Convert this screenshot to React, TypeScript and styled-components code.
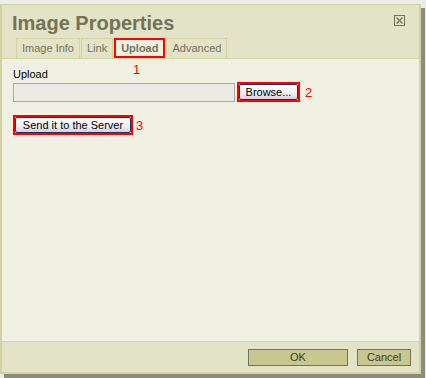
import styled, { createGlobalStyle } from 'styled-components';

const GlobalStyle = createGlobalStyle`
  html, body {
    margin: 0;
    padding: 0;
    background: #ececec;
    font-family: 'Liberation Sans', Arial, sans-serif;
  }
`;

const tabs = ['Image Info', 'Link', 'Upload', 'Advanced'];

const App = () => {
  return (
    <Page>
      <GlobalStyle />
      <Dialog>
        <Header>
          <TitleRow>
            <Title>Image Properties</Title>
            <CloseButton aria-label="close">
              <svg width="11" height="11" viewBox="0 0 11 11">
                <rect x="0.5" y="0.5" width="10" height="10" fill="none" stroke="#737357" />
                <path d="M2.5 2.5 L8.5 8.5 M8.5 2.5 L2.5 8.5" stroke="#737357" strokeWidth="1.2" />
              </svg>
            </CloseButton>
          </TitleRow>
          <TabBar>
            {tabs.map((t) => (
              <Tab key={t} $active={t === 'Upload'}>
                {t}
              </Tab>
            ))}
          </TabBar>
        </Header>
        <Content>
          <Callout $left={131} $top={3}>1</Callout>
          <FieldLabel>Upload</FieldLabel>
          <FileRow>
            <FileInput />
            <Marked>
              <XpButton $width={59}>Browse...</XpButton>
            </Marked>
            <Number>2</Number>
          </FileRow>
          <SendRow>
            <Marked>
              <XpButton $width={116}>Send it to the Server</XpButton>
            </Marked>
            <Number>3</Number>
          </SendRow>
        </Content>
        <Footer>
          <FooterButton $width={100}>OK</FooterButton>
          <FooterButton $width={54}>Cancel</FooterButton>
        </Footer>
      </Dialog>
    </Page>
  );
};

export default App;

const Page = styled.div`
  width: 426px;
  height: 378px;
  padding-top: 4px;
  box-sizing: border-box;
`;

const Dialog = styled.div`
  width: 421px;
  height: 370px;
  box-sizing: border-box;
  border: 2px solid #d3d3a1;
  border-top-width: 1px;
  background: #e3e3c7;
  display: flex;
  flex-direction: column;
  box-shadow: 4px 4px 0 #8c8c78;
`;

const Header = styled.div`
  display: flex;
  flex-direction: column;
  border-bottom: 1px solid #d3d3a1;
`;

const TitleRow = styled.div`
  display: flex;
  justify-content: space-between;
  align-items: flex-start;
  padding: 6px 14px 0 10px;
  height: 33px;
  box-sizing: border-box;
`;

const Title = styled.h1`
  margin: 0;
  font-size: 20px;
  font-weight: bold;
  color: #737357;
  line-height: 24px;
`;

const CloseButton = styled.div`
  margin-top: 4px;
  width: 11px;
  height: 11px;
  display: flex;
`;

const TabBar = styled.div`
  display: flex;
  align-items: flex-end;
  padding-left: 14px;
  gap: 1px;
  height: 20px;
`;

const Tab = styled.div<{ $active?: boolean }>`
  height: 20px;
  box-sizing: border-box;
  padding: 0 5px;
  font-size: 11px;
  color: #737357;
  background: ${(p) => (p.$active ? '#f1f1e3' : '#e3e3c7')};
  border: ${(p) => (p.$active ? '2px solid #ff0000' : '1px solid #d3d3a1')};
  border-bottom: ${(p) => (p.$active ? '2px solid #ff0000' : 'none')};
  font-weight: ${(p) => (p.$active ? 'bold' : 'normal')};
  line-height: ${(p) => (p.$active ? '16px' : '19px')};
`;

const Content = styled.div`
  position: relative;
  flex: 1;
  background: #f1f1e3;
  padding: 9px 11px;
  display: flex;
  flex-direction: column;
  font-size: 11px;
  color: #000;
`;

const Callout = styled.span<{ $left: number; $top: number }>`
  position: absolute;
  left: ${(p) => p.$left}px;
  top: ${(p) => p.$top}px;
  color: #ff0000;
  font-size: 13px;
`;

const FieldLabel = styled.div`
  font-size: 11px;
  line-height: 13px;
  margin-bottom: 1px;
`;

const FileRow = styled.div`
  display: flex;
  align-items: center;
  gap: 2px;
`;

const FileInput = styled.div`
  width: 222px;
  height: 19px;
  box-sizing: border-box;
  background: #ebebe4;
  border: 1px solid #a5acb2;
`;

const Marked = styled.div`
  border: 2px solid #ff0000;
  display: flex;
`;

const XpButton = styled.div<{ $width: number }>`
  width: ${(p) => p.$width}px;
  height: 16px;
  box-sizing: border-box;
  border: 1px solid #2b2b5a;
  border-radius: 2px;
  background: linear-gradient(#ffffff 0%, #f2f2f6 55%, #d4d1e2 100%);
  font-size: 11px;
  line-height: 14px;
  text-align: center;
  color: #000;
`;

const Number = styled.span`
  color: #ff0000;
  font-size: 13px;
  margin-left: 3px;
`;

const SendRow = styled.div`
  display: flex;
  align-items: center;
  margin-top: 13px;
`;

const Footer = styled.div`
  height: 31px;
  box-sizing: border-box;
  border-top: 1px solid #d3d3a1;
  display: flex;
  justify-content: flex-end;
  align-items: flex-start;
  padding: 7px 8px 0 0;
  gap: 9px;
`;

const FooterButton = styled.div<{ $width: number }>`
  width: ${(p) => p.$width}px;
  height: 17px;
  box-sizing: border-box;
  border: 1px solid #737357;
  background: #c7c78f;
  color: #3b3b1f;
  font-size: 11px;
  line-height: 15px;
  text-align: center;
`;
